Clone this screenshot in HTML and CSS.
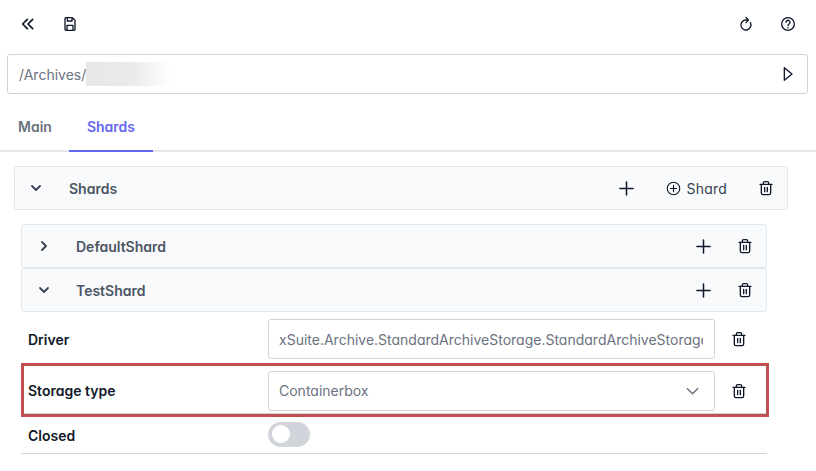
FILE: index.html
```html
<!DOCTYPE html>
<html lang="en">
<head>
    <meta charset="UTF-8">
    <title>Archive settings</title>
    <link rel="stylesheet" href="styles.css">
</head>
<body>

<!-- Toolbar -->
<div class="toolbar">
    <div class="toolbar-group left">
        <svg class="icon back" viewBox="0 0 24 24"><path d="M11 5l-7 7 7 7M19 5l-7 7 7 7"/></svg>
        <svg class="icon" viewBox="0 0 24 24"><path d="M6 2.500h9.500l4 4V20a1.500 1.500 0 0 1-1.500 1.500H6A1.500 1.500 0 0 1 4.500 20V4A1.500 1.500 0 0 1 6 2.500zM8 2.500v5h7v-5M7.500 21.500V14h9v7.500"/></svg>
    </div>
    <div class="toolbar-group right">
        <svg class="icon" viewBox="0 0 24 24"><path d="M18.500 10A7.500 7.500 0 1 1 12 6h3M12 2l3.500 4L12 10"/></svg>
        <svg class="icon" viewBox="0 0 24 24"><circle cx="12" cy="12" r="9.500"/><path d="M9 9.500a3 3 0 1 1 4.600 2.500c-1 .7-1.600 1.300-1.600 2.500M12 17.500v.5"/></svg>
    </div>
</div>

<!-- Path -->
<div class="path-box">
    <span class="path-text">/Archives/</span>
    <span class="path-blur"></span>
    <svg class="icon play" viewBox="0 0 24 24"><path d="M6.500 2.500v19L18 12z"/></svg>
</div>

<!-- Tabs -->
<div class="tabs">
    <a class="tab">Main</a>
    <a class="tab active">Shards</a>
</div>

<!-- Shards -->
<div class="panel panel-top">
    <svg class="chevron" viewBox="0 0 12 12"><path d="M2 4l4 4 4-4"/></svg>
    <span class="panel-title">Shards</span>
    <svg class="icon plus" viewBox="0 0 16 16"><path d="M8 1v14M1 8h14"/></svg>
    <span class="add-shard">
        <svg class="icon" viewBox="0 0 24 24"><circle cx="12" cy="12" r="10"/><path d="M12 7v10M7 12h10"/></svg>
        Shard
    </span>
    <svg class="icon trash" viewBox="0 0 24 24"><path d="M3 6.500h18M8 6.500v-2a2 2 0 0 1 2-2h4a2 2 0 0 1 2 2v2M5 6.500v13A2.500 2.500 0 0 0 7.500 22h9a2.500 2.500 0 0 0 2.500-2.500v-13M10 11v6.500M14 11v6.500"/></svg>
</div>

<div class="children">
    <div class="panel panel-child">
        <svg class="chevron" viewBox="0 0 12 12"><path d="M4 2l4 4-4 4"/></svg>
        <span class="panel-title">DefaultShard</span>
        <svg class="icon plus" viewBox="0 0 16 16"><path d="M8 1v14M1 8h14"/></svg>
        <svg class="icon trash" viewBox="0 0 24 24"><path d="M3 6.500h18M8 6.500v-2a2 2 0 0 1 2-2h4a2 2 0 0 1 2 2v2M5 6.500v13A2.500 2.500 0 0 0 7.500 22h9a2.500 2.500 0 0 0 2.500-2.500v-13M10 11v6.500M14 11v6.500"/></svg>
    </div>
    <div class="panel panel-child">
        <svg class="chevron" viewBox="0 0 12 12"><path d="M2 4l4 4 4-4"/></svg>
        <span class="panel-title">TestShard</span>
        <svg class="icon plus" viewBox="0 0 16 16"><path d="M8 1v14M1 8h14"/></svg>
        <svg class="icon trash" viewBox="0 0 24 24"><path d="M3 6.500h18M8 6.500v-2a2 2 0 0 1 2-2h4a2 2 0 0 1 2 2v2M5 6.500v13A2.500 2.500 0 0 0 7.500 22h9a2.500 2.500 0 0 0 2.500-2.500v-13M10 11v6.500M14 11v6.500"/></svg>
    </div>

    <div class="row row-driver">
        <label class="row-label">Driver</label>
        <div class="field"><span class="field-text">xSuite.Archive.StandardArchiveStorage.StandardArchiveStorage</span></div>
        <svg class="icon trash" viewBox="0 0 24 24"><path d="M3 6.500h18M8 6.500v-2a2 2 0 0 1 2-2h4a2 2 0 0 1 2 2v2M5 6.500v13A2.500 2.500 0 0 0 7.500 22h9a2.500 2.500 0 0 0 2.500-2.500v-13M10 11v6.500M14 11v6.500"/></svg>
    </div>
    <div class="row row-storage">
        <label class="row-label">Storage type</label>
        <div class="field">
            <span class="field-text">Containerbox</span>
            <svg class="select-arrow" viewBox="0 0 14 8"><path d="M1 1l6 6 6-6"/></svg>
        </div>
        <svg class="icon trash" viewBox="0 0 24 24"><path d="M3 6.500h18M8 6.500v-2a2 2 0 0 1 2-2h4a2 2 0 0 1 2 2v2M5 6.500v13A2.500 2.500 0 0 0 7.500 22h9a2.500 2.500 0 0 0 2.500-2.500v-13M10 11v6.500M14 11v6.500"/></svg>
    </div>
    <div class="row row-closed">
        <label class="row-label">Closed</label>
        <span class="toggle"><span class="toggle-knob"></span></span>
    </div>
</div>

</body>
</html>
```

FILE: styles.css
```css
body {
    margin: 0;
    font-family: 'Inter', 'Liberation Sans', sans-serif;
    font-feature-settings: "cv11";
    font-size: 14px;
    color: #4b5563;
    background: #ffffff;
    overflow: hidden;
}

.icon {
    display: block;
    width: 16px;
    height: 16px;
    fill: none;
    stroke: #0f172a;
    stroke-width: 2;
    stroke-linecap: round;
    stroke-linejoin: round;
    flex: none;
}
.back {
    stroke-width: 2.6;
}

/* Toolbar */
.toolbar {
    display: flex;
    justify-content: space-between;
    height: 48px;
    padding: 16px 20px 0;
    box-sizing: border-box;
}
.toolbar-group {
    display: flex;
    gap: 26px;
}

/* Path */
.path-box {
    display: flex;
    align-items: center;
    height: 40px;
    margin: 6px 8px 0 7px;
    padding: 0 11px 0 11px;
    box-sizing: border-box;
    border: 1px solid #d1d5db;
    border-radius: 3px;
    color: #6b7280;
}
.path-blur {
    width: 85px;
    height: 24px;
    background: linear-gradient(90deg, #e6e7e8 0%, #e9eaeb 55%, #ffffff 100%);
}
.play {
    margin-left: auto;
}

/* Tabs */
.tabs {
    display: flex;
    height: 56px;
    margin-top: 2px;
    box-sizing: border-box;
    border-bottom: 2px solid #e5e7eb;
}
.tab {
    padding: 22px 16px 0;
    margin-bottom: -2px;
    font-weight: 600;
    color: #6b7280;
    border-bottom: 2px solid transparent;
}
.tab:first-child {
    padding: 22px 17px 0 18px;
}
.tab.active {
    padding: 22px 18px 0;
    color: #6366f1;
    border-bottom-color: #6366f1;
}

/* Panels */
.panel {
    display: flex;
    align-items: center;
    height: 44px;
    box-sizing: border-box;
    background: #f9fafb;
    border: 1px solid #e2e8f0;
    border-radius: 3px;
}
.panel-top {
    width: 774px;
    margin: 14px 0 14px 14px;
    padding: 0 13px 0 15px;
}
.panel-child {
    padding: 0 13px 0 16px;
}
.chevron {
    width: 12px;
    height: 12px;
    fill: none;
    stroke: #374151;
    stroke-width: 1.8;
    stroke-linecap: round;
    stroke-linejoin: round;
    flex: none;
}
.panel-title {
    margin-left: 27px;
    font-weight: 600;
    color: #4b5563;
    flex: 1;
}
.panel-child .panel-title {
    margin-left: 26px;
}
.plus {
    width: 15px;
    height: 15px;
    stroke-width: 1.6;
}
.add-shard {
    display: flex;
    align-items: center;
    gap: 6px;
    margin: 0 31px 0 32px;
    color: #374151;
    letter-spacing: 0.2px;
}
.add-shard .icon {
    width: 15px;
    height: 15px;
    stroke-width: 1.8;
}
.panel-child .trash {
    margin-left: 26px;
}

/* Form rows */
.children {
    width: 746px;
    margin-left: 21px;
}
.row {
    display: flex;
    align-items: center;
}
.row-driver {
    height: 40px;
    margin-top: 7px;
    padding-left: 7px;
}
.row-storage {
    height: 54px;
    margin: 4px -2px 0 0;
    padding: 5px 0 3px 4px;
    box-sizing: border-box;
    border: 3px solid #c05050;
    box-shadow: inset 0 -1px 0 #d1d5db;
}
.row-storage .row-label,
.row-storage .field-text {
    padding-bottom: 2px;
}
.row-closed {
    height: 36px;
    padding-left: 7px;
    border-bottom: 1px solid #d1d5db;
}
.row-label {
    width: 240px;
    flex: none;
    font-weight: 600;
    color: #111827;
}
.field {
    display: flex;
    align-items: center;
    width: 447px;
    height: 40px;
    flex: none;
    padding: 0 11px 0 10px;
    box-sizing: border-box;
    border: 1px solid #d1d5db;
    border-radius: 3px;
    color: #6b7280;
}
.field-text {
    flex: 1;
    overflow: hidden;
    white-space: nowrap;
}
.select-arrow {
    width: 13px;
    height: 8px;
    margin-right: 4px;
    fill: none;
    stroke: #6b7280;
    stroke-width: 1.6;
    flex: none;
}
.row .trash {
    margin-left: 16px;
}

/* Toggle */
.toggle {
    display: flex;
    align-items: center;
    width: 42px;
    height: 25px;
    margin-bottom: 2px;
    padding: 0 4px;
    box-sizing: border-box;
    background: #d1d5db;
    border-radius: 13px;
}
.toggle-knob {
    width: 18px;
    height: 18px;
    background: #ffffff;
    border-radius: 50%;
}
```
